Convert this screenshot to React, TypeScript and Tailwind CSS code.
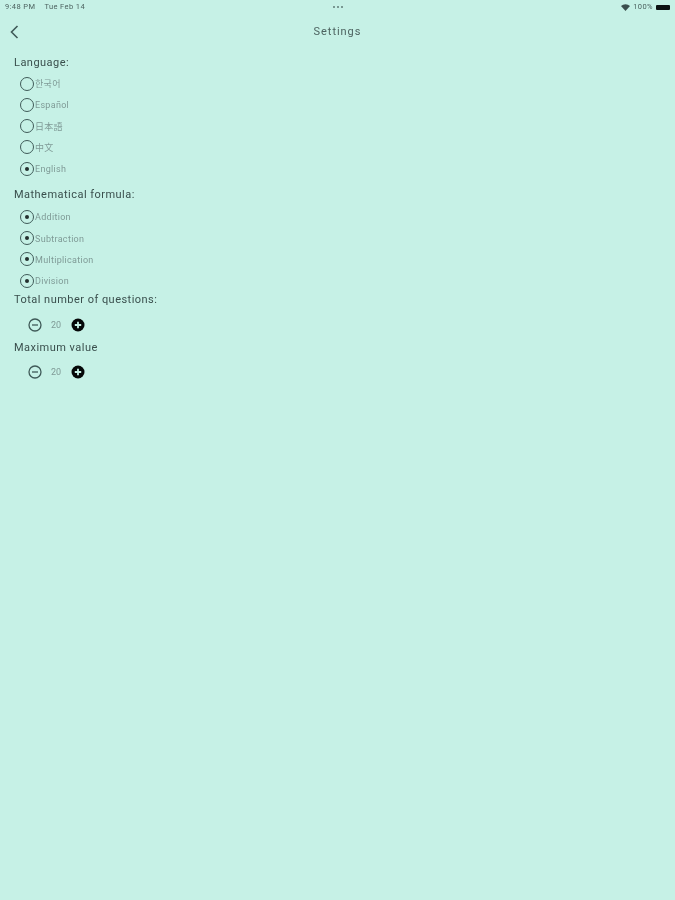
const FONT = "font-['Roboto','Noto_Sans_CJK_KR',sans-serif]";

const LANGUAGES = [
  { label: '한국어', checked: false },
  { label: 'Español', checked: false },
  { label: '日本語', checked: false },
  { label: '中文', checked: false },
  { label: 'English', checked: true },
];

const FORMULAS = ['Addition', 'Subtraction', 'Multiplication', 'Division'];

function Radio({ label, checked }: { label: string; checked: boolean }) {
  return (
    <div className="flex h-[21.25px] items-center pl-[20px]">
      <span className="flex h-[14px] w-[14px] items-center justify-center rounded-full border-[1.5px] border-[#3f5a58]">
        {checked && <span className="h-[4px] w-[4px] rounded-full bg-[#24302f]" />}
      </span>
      <span className="ml-px mt-[2px] text-[9px] leading-none tracking-[0.3px] text-[#7f9a96]">{label}</span>
    </div>
  );
}

function Stepper() {
  return (
    <div className="flex h-[21px] items-center pl-[28px]">
      <svg width="14" height="14" viewBox="0 0 14 14" fill="none">
        <circle cx="7" cy="7" r="6" stroke="#3f5a58" strokeWidth="1.3" />
        <path d="M4 7h6" stroke="#3f5a58" strokeWidth="1.3" />
      </svg>
      <span className="ml-[9px] mt-[1px] w-[12px] text-[9px] leading-none text-[#7f9a96]">20</span>
      <svg className="ml-[8px]" width="14" height="14" viewBox="0 0 14 14">
        <circle cx="7" cy="7" r="6.5" fill="#050808" />
        <path d="M3.8 7h6.4M7 3.8v6.4" stroke="#c6f1e6" strokeWidth="1.8" />
      </svg>
    </div>
  );
}

function Heading({ children }: { children: string }) {
  return <div className="pl-[14px] text-[11px] leading-[14px] tracking-[0.47px] text-[#3a4f4d]">{children}</div>;
}

export default function App() {
  return (
    <div className={`${FONT} h-[900px] w-[675px] overflow-hidden bg-[#c6f1e6]`}>
      <div className="blur-[0.4px]">
        {/* Status bar */}
        <div className="flex h-[14px] items-center px-[5px] text-[7.5px] leading-none tracking-[0.4px] text-[#4d6360]">
          <div className="flex flex-1 gap-[9px]">
            <span>9:48 PM</span>
            <span>Tue Feb 14</span>
          </div>
          <div className="flex gap-[2px]">
            <span className="h-[2px] w-[2px] rounded-full bg-[#5f7a76]" />
            <span className="h-[2px] w-[2px] rounded-full bg-[#5f7a76]" />
            <span className="h-[2px] w-[2px] rounded-full bg-[#5f7a76]" />
          </div>
          <div className="flex flex-1 items-center justify-end gap-[3px]">
            <svg width="9" height="7" viewBox="0 0 9 7">
              <path d="M0 2a6.5 6.5 0 0 1 9 0L4.5 7z" fill="#3a4f4d" />
            </svg>
            <span>100%</span>
            <span className="h-[5px] w-[14px] rounded-[1px] bg-[#0c1212]" />
          </div>
        </div>

        {/* Nav bar */}
        <div className="relative flex h-[36px] items-center justify-center">
          <svg className="absolute left-[9px] top-[11px]" width="10" height="14" viewBox="0 0 10 14" fill="none">
            <path d="M8.5 1 2.5 7 8.5 13" stroke="#3f5a58" strokeWidth="1.6" />
          </svg>
          <span className="text-[11px] tracking-[0.95px] text-[#4d6360]">Settings</span>
        </div>

        <div className="pt-[6px]">
          <Heading>Language:</Heading>
          <div className="mt-[3px]">
            {LANGUAGES.map((l) => (
              <Radio key={l.label} label={l.label} checked={l.checked} />
            ))}
          </div>
          <div className="mt-[9px]">
            <Heading>Mathematical formula:</Heading>
          </div>
          <div className="mt-[4px]">
            {FORMULAS.map((f) => (
              <Radio key={f} label={f} checked />
            ))}
          </div>
          <div className="mt-[2px]">
            <Heading>Total number of questions:</Heading>
          </div>
          <div className="mt-[7px]">
            <Stepper />
          </div>
          <div className="mt-[6px]">
            <Heading>Maximum value</Heading>
          </div>
          <div className="mt-[6px]">
            <Stepper />
          </div>
        </div>
      </div>
    </div>
  );
}
